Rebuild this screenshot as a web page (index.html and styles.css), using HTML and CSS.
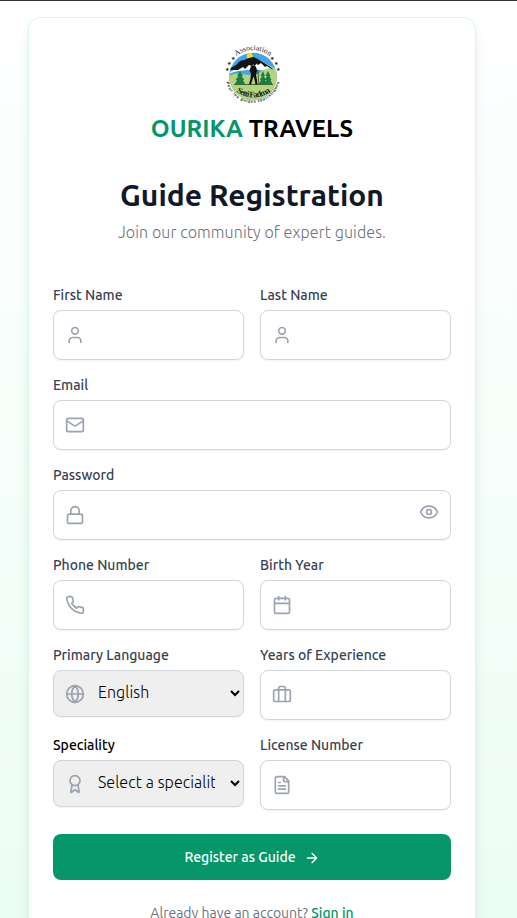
FILE: index.html
```html
<!DOCTYPE html>
<html lang="en">
<head>
<meta charset="utf-8">
<title>Guide Registration</title>
<link rel="stylesheet" href="styles.css">
</head>
<body>
<main class="page">
<section class="card">
  <header class="brand">
    <svg class="logo" viewBox="0 0 60 64">
      <defs>
        <clipPath id="disc"><circle cx="29" cy="34.500" r="23.800"/></clipPath>
        <path id="topArc" d="M5.500 23A26 26 0 0 1 52.500 23"/>
        <path id="bottomArc" d="M2 39A27.300 27.300 0 0 0 55.500 39"/>
        <path id="nameArc" d="M10 48Q29 63 49 48"/>
      </defs>
      <g clip-path="url(#disc)">
        <path fill="#43a5e8" d="M0 0h60v64H0z"/>
        <circle cx="25.700" cy="14" r="3" fill="#ffdc16"/>
        <path fill="#fff" d="M3 32l10-6 7-5 10-4 5 1 9 5 7 4 6 5-6-2-8-1-7-1-6 0-7 0-9 1z"/>
        <path fill="#151515" d="M3 28l9-5 4-4 4-1 5-2 4-1 3 1 5 3 8 5 7 5-5-2-4-3-2 1-4-4-3 2-3-3-3 4-3-1-4 4-2-2-5 3-4 0z"/>
        <path fill="#b4d47c" d="M0 36q10-6 18-4t16 0q8-7 14-5l12 4v34H0z"/>
        <path fill="#168044" d="M16 29l-3 5h1.500l-3 4h1.500l-2 4h10l-2-4h1.500l-3-4h1.500zM39 29l-2.500 5h1.500l-2 4h1l-2 4h8l-2-4h1.500l-3-4h1.500zM44 29l-2.500 5h1.500l-2 4h1.500l-2 4h8l-2-4h1l-2-4h1z"/>
        <path stroke="#214b2b" stroke-width=".8" d="M10 42.500h39"/>
      </g>
      <circle cx="30.800" cy="21.500" r="1.800" fill="#111"/>
      <path fill="#111" d="M27 24l3.500-1 1.500 2 1 4-1 4 1 5 .5 4.500h-2l-1-5-1-3-1 3-1.500 5h-2l1.500-6 .5-5-1.500-3z"/>
      <path stroke="#111" stroke-width=".6" fill="none" d="M31 26l3 2.500.8 14"/>
      <text class="logo-top"><textPath href="#topArc" startOffset="50%" textLength="36">Association</textPath></text>
      <text class="logo-name"><textPath href="#nameArc" startOffset="50%" textLength="37">Setti Fadma</textPath></text>
      <text class="logo-bottom"><textPath href="#bottomArc" startOffset="50%" textLength="72">Pour les guides touristiques</textPath></text>
      <g class="logo-stars"><text x="7" y="18">★</text><text x="3" y="23">★</text><text x="1" y="29">★</text><text x="46" y="18">★</text><text x="50" y="23">★</text><text x="52" y="29">★</text></g>
    </svg>
    <div class="brand-name"><span>OURIKA</span> TRAVELS</div>
  </header>
  <div class="heading">
    <h1>Guide Registration</h1>
    <p>Join our community of expert guides.</p>
  </div>
  <form class="form">
    <div class="field">
      <label for="first">First Name</label>
      <div class="control"><svg class="icon" viewBox="0 0 24 24"><path d="M19 21v-2a4 4 0 0 0-4-4H9a4 4 0 0 0-4 4v2"/><circle cx="12" cy="7" r="4"/></svg><input id="first"></div>
    </div>
    <div class="field">
      <label for="last">Last Name</label>
      <div class="control"><svg class="icon" viewBox="0 0 24 24"><path d="M19 21v-2a4 4 0 0 0-4-4H9a4 4 0 0 0-4 4v2"/><circle cx="12" cy="7" r="4"/></svg><input id="last"></div>
    </div>
    <div class="field wide">
      <label for="email">Email</label>
      <div class="control"><svg class="icon" viewBox="0 0 24 24"><rect x="2" y="4" width="20" height="16" rx="2"/><path d="m22 7-8.97 5.7a1.94 1.94 0 0 1-2.06 0L2 7"/></svg><input id="email" type="email"></div>
    </div>
    <div class="field wide">
      <label for="pass">Password</label>
      <div class="control"><svg class="icon" viewBox="0 0 24 24"><rect x="3" y="11" width="18" height="11" rx="2"/><path d="M7 11V7a5 5 0 0 1 10 0v4"/></svg><input id="pass" type="password"><svg class="icon eye" viewBox="0 0 24 24"><path d="M2.06 12.35a1 1 0 0 1 0-.7 10.75 10.75 0 0 1 19.88 0 1 1 0 0 1 0 .7 10.75 10.75 0 0 1-19.88 0"/><circle cx="12" cy="12" r="3"/></svg></div>
    </div>
    <div class="field">
      <label for="phone">Phone Number</label>
      <div class="control"><svg class="icon" viewBox="0 0 24 24"><path d="M22 16.92v3a2 2 0 0 1-2.18 2 19.79 19.79 0 0 1-8.63-3.07 19.5 19.5 0 0 1-6-6 19.79 19.79 0 0 1-3.07-8.67A2 2 0 0 1 4.11 2h3a2 2 0 0 1 2 1.72 12.84 12.84 0 0 0 .7 2.81 2 2 0 0 1-.45 2.11L8.09 9.91a16 16 0 0 0 6 6l1.27-1.27a2 2 0 0 1 2.11-.45 12.84 12.84 0 0 0 2.81.7A2 2 0 0 1 22 16.92z"/></svg><input id="phone"></div>
    </div>
    <div class="field">
      <label for="birth">Birth Year</label>
      <div class="control"><svg class="icon" viewBox="0 0 24 24"><path d="M8 2v4M16 2v4M3 10h18"/><rect x="3" y="4" width="18" height="18" rx="2"/></svg><input id="birth"></div>
    </div>
    <div class="field">
      <label for="lang">Primary Language</label>
      <div class="control"><svg class="icon" viewBox="0 0 24 24"><circle cx="12" cy="12" r="10"/><path d="M12 2a14.5 14.5 0 0 0 0 20 14.5 14.5 0 0 0 0-20M2 12h20"/></svg><select id="lang"><option>English</option></select></div>
    </div>
    <div class="field">
      <label for="years">Years of Experience</label>
      <div class="control"><svg class="icon case" viewBox="0 0 24 24"><rect x="2" y="7" width="20" height="14" rx="2"/><path d="M16 21V5a2 2 0 0 0-2-2h-4a2 2 0 0 0-2 2v16"/></svg><input id="years"></div>
    </div>
    <div class="field">
      <label class="plain" for="spec">Speciality</label>
      <div class="control"><svg class="icon" viewBox="0 0 24 24"><path d="m15.48 12.89 1.51 8.53a.5.5 0 0 1-.81.47l-3.58-2.69a1 1 0 0 0-1.2 0l-3.58 2.69a.5.5 0 0 1-.81-.47l1.51-8.53"/><circle cx="12" cy="8" r="6"/></svg><select id="spec"><option>Select a speciality</option></select></div>
    </div>
    <div class="field">
      <label for="license">License Number</label>
      <div class="control"><svg class="icon" viewBox="0 0 24 24"><path d="M15 2H6a2 2 0 0 0-2 2v16a2 2 0 0 0 2 2h12a2 2 0 0 0 2-2V7ZM14 2v4a2 2 0 0 0 2 2h4M10 9H8M16 13H8M16 17H8"/></svg><input id="license"></div>
    </div>
    <button class="submit wide" type="button"><span>Register as Guide</span><svg viewBox="0 0 24 24"><path d="M5 12h14M12 5l7 7-7 7"/></svg></button>
  </form>
  <p class="signin"><span>Already have an account?</span> <a href="#">Sign in</a></p>
</section>
</main>
</body>
</html>
```

FILE: styles.css
```css
* { box-sizing: border-box; margin: 0; }
html, body { height: 100%; overflow: hidden; }
body { font-family: Ubuntu, "Noto Sans", sans-serif; font-size: 16px; line-height: 24px; color: #000; }
.page {
  height: 918px;
  padding: 16px 13px 0 0;
  border-top: 1px solid #333;
  background: linear-gradient(to bottom, #fff 0, #ecfdf5 100%);
  overflow: hidden;
}
.card {
  width: 448px;
  height: 960px;
  margin: 0 auto;
  padding: 24px;
  border: 1px solid #d1fae5;
  border-radius: 12px;
  background: #fff;
  box-shadow: 0 10px 15px -3px rgba(0,0,0,.1), 0 4px 6px -4px rgba(0,0,0,.1);
}
.brand { display: flex; flex-direction: column; align-items: center; }
.logo { width: 60px; height: 64px; margin-left: 4px; overflow: visible; }
.logo text { text-anchor: middle; fill: #222; }
.logo-top { font: 7.5px "Liberation Serif", serif; }
.logo-name { font: bold 8.5px "Liberation Serif", serif; }
.logo-bottom { font: bold 4px "Liberation Sans", sans-serif; }
.logo-stars { font: 5px "DejaVu Sans", sans-serif; }
.logo .logo-stars text { text-anchor: start; }
.brand-name { margin-top: 7px; font-size: 24px; line-height: 32px; font-weight: 600; white-space: nowrap; }
.brand-name span, .signin a { color: #059669; }
.heading { margin-top: 32px; text-align: center; white-space: nowrap; }
h1 { font-size: 30px; line-height: 36px; font-weight: 600; color: #111827; }
.heading p { margin-top: 7px; font-weight: 300; letter-spacing: .1px; color: #6b7280; }
.form { display: grid; grid-template-columns: 1fr 1fr; gap: 15px 16px; margin-top: 41px; }
.field { height: 75px; min-width: 0; }
.wide { grid-column: 1 / -1; }
label { display: block; width: max-content; height: 20px; margin-bottom: 5px; font-size: 14px; line-height: 20px; font-weight: 500; color: #374151; }
label.plain { color: #000; }
.control { position: relative; }
input, select {
  display: block;
  width: 100%;
  height: 50px;
  padding: 12px 12px 12px 44px;
  border: 1px solid #d1d5db;
  border-radius: 8px;
  background: #fff;
  font: 300 16px/24px Ubuntu, "Noto Sans", sans-serif;
  color: #000;
  box-shadow: 0 1px 2px rgba(0,0,0,.05);
}
select { height: 47px; padding: 10px 12px 13px 40px; background: #efefef; letter-spacing: .1px; }
.icon { position: absolute; left: 12px; top: calc(50% - 10px); width: 20px; height: 20px; fill: none; stroke: #9ca3af; stroke-width: 2; stroke-linecap: round; stroke-linejoin: round; }
.case { top: 14px; }
.eye { left: auto; right: 12px; top: 12px; }
.submit { display: flex; align-items: center; justify-content: center; gap: 8px; height: 46px; margin-top: 9px; padding-bottom: 2px; border: 0; border-radius: 8px; background: #059669; color: #fff; font: 500 14px/20px Ubuntu, "Noto Sans", sans-serif; }
.submit svg { position: relative; top: 1px; width: 16px; height: 16px; fill: none; stroke: #fff; stroke-width: 2; stroke-linecap: round; stroke-linejoin: round; }
.signin { margin-top: 23px; text-align: center; font-size: 14px; line-height: 20px; color: #6b7280; white-space: nowrap; }
.signin a { font-weight: 500; text-decoration: none; }
```
